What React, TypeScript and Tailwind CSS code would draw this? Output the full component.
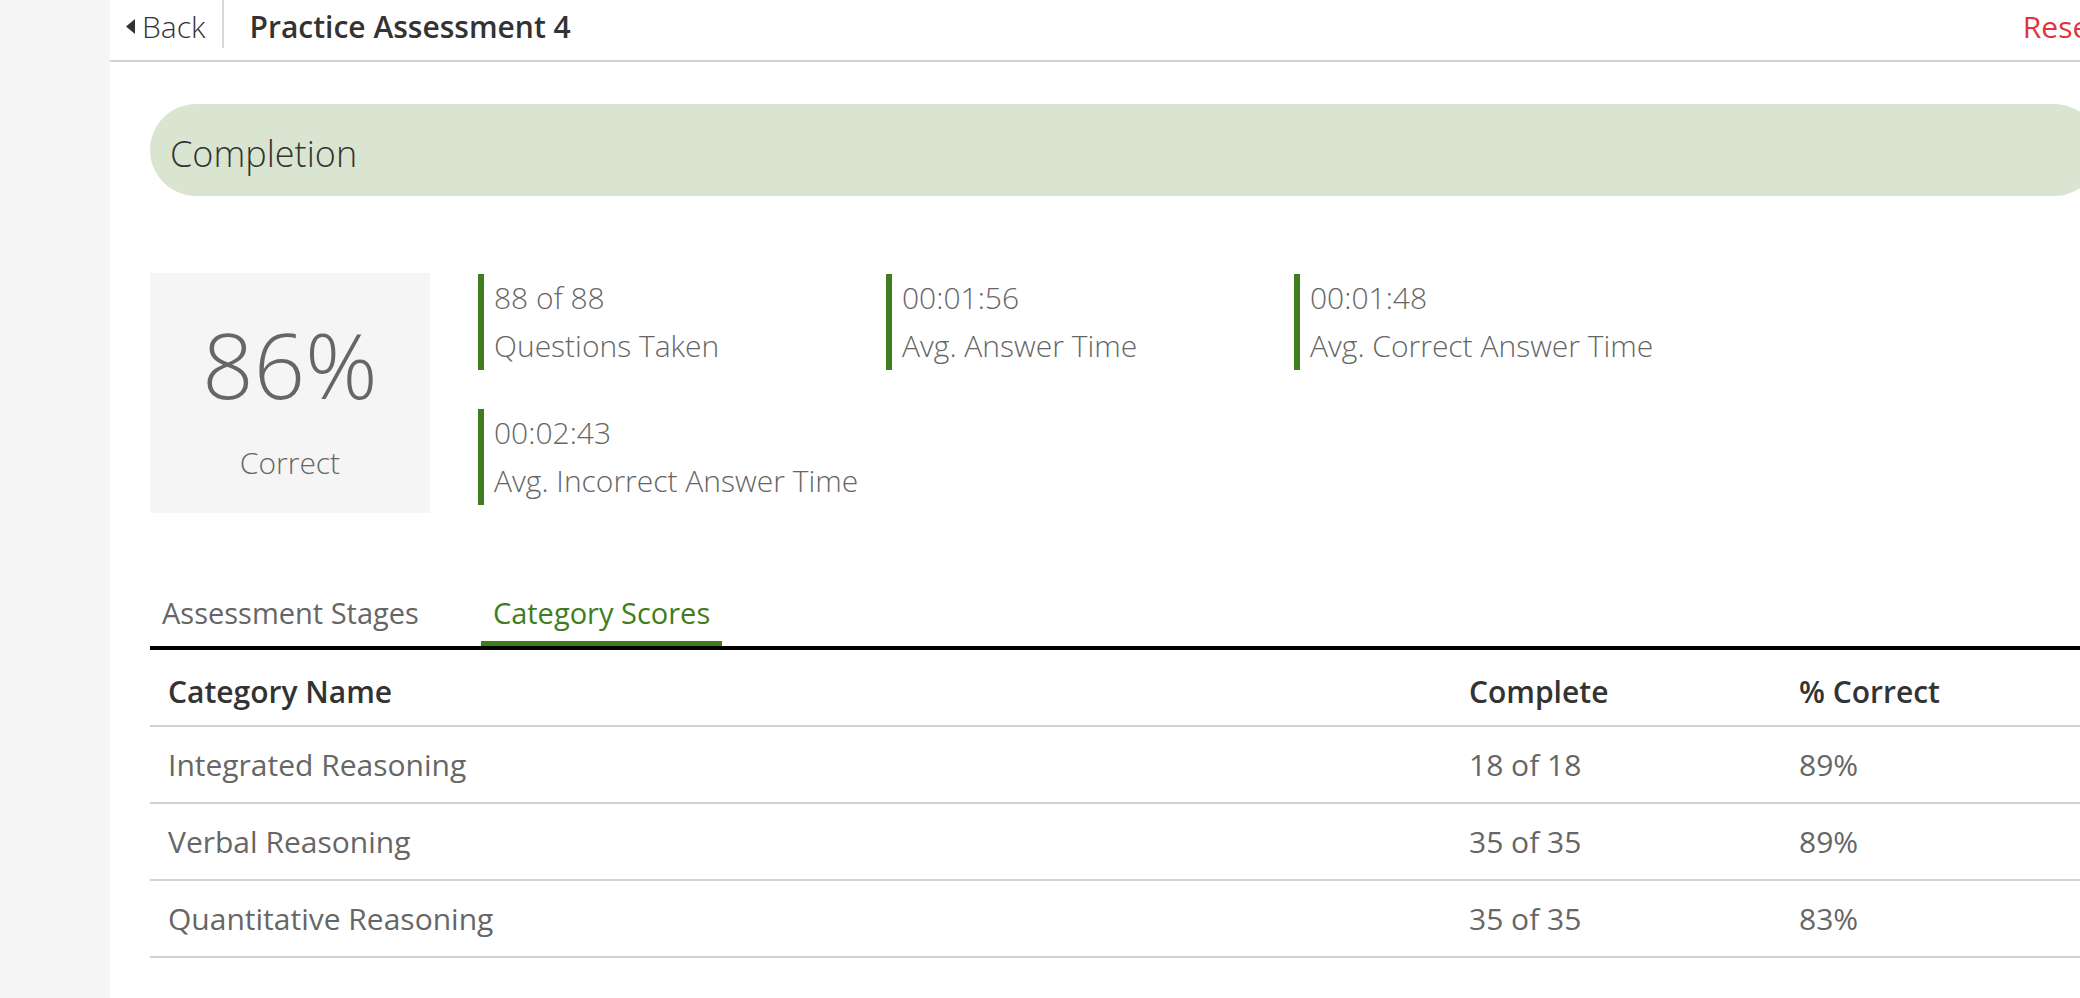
import React from 'react';

const stats = [
  { value: '88 of 88', label: 'Questions Taken' },
  { value: '00:01:56', label: 'Avg. Answer Time' },
  { value: '00:01:48', label: 'Avg. Correct Answer Time' },
  { value: '00:02:43', label: 'Avg. Incorrect Answer Time' },
];

const rows = [
  { name: 'Integrated Reasoning', complete: '18 of 18', correct: '89%' },
  { name: 'Verbal Reasoning', complete: '35 of 35', correct: '89%' },
  { name: 'Quantitative Reasoning', complete: '35 of 35', correct: '83%' },
];

function StatItem({ value, label }: { value: string; label: string }) {
  return (
    <div className="h-[96px] border-l-[6px] border-[#3f7d1e] pl-[10px] font-light text-[30px] leading-[48px] text-[#666]">
      <div>{value}</div>
      <div className="whitespace-nowrap">{label}</div>
    </div>
  );
}

export default function App() {
  return (
    <div
      className="flex w-[2080px] h-[998px] overflow-hidden bg-white"
      style={{ fontFamily: '"Open Sans", "Liberation Sans", sans-serif' }}
    >
      <aside className="w-[110px] shrink-0 bg-[#f5f5f5]" />
      <div className="w-[2030px] shrink-0">
        {/* top bar */}
        <header className="flex items-start justify-between h-[62px] border-b-2 border-[#d2d2d2] pl-[16px] pr-[40px]">
          <div className="flex items-start">
            <button className="flex items-center h-[52px] gap-[7px] text-[30px] font-light text-[#333]">
              <svg width="9" height="15" viewBox="0 0 9 15">
                <path d="M9 0 L0 7.5 L9 15 Z" fill="#333" />
              </svg>
              Back
            </button>
            <div className="ml-[17px] w-[2px] h-[48px] bg-[#d8d8d8]" />
            <h1 className="ml-[25px] h-[52px] flex items-center text-[30px] font-semibold text-[#333]">
              Practice Assessment 4
            </h1>
          </div>
          <button className="h-[52px] flex items-center text-[30px] text-[#e0333a]">Reset</button>
        </header>

        <div className="px-[40px]">
          {/* banner */}
          <div className="mt-[42px] h-[92px] rounded-full bg-[#d9e5d0] flex items-center pl-[20px]">
            <h2 className="text-[36px] font-light text-[#333] pt-[8px]">Completion</h2>
          </div>

          {/* summary */}
          <div className="mt-[77px] flex">
            <div className="w-[280px] h-[240px] shrink-0 bg-[#f5f5f5] flex flex-col items-center text-[#666]">
              <div className="mt-[36px] text-[90px] font-light leading-[110px]">86%</div>
              <div className="mt-[24px] text-[30px] font-light leading-[40px]">Correct</div>
            </div>
            <div className="ml-[48px] grid grid-cols-[408px_408px_408px] gap-y-[39px] pt-[1px] self-start">
              {stats.map((s) => (
                <StatItem key={s.label} value={s.value} label={s.label} />
              ))}
            </div>
          </div>

          {/* tabs */}
          <div className="mt-[76px] flex gap-[50px] border-b-4 border-black">
            <div className="px-[12px] pb-[9px] text-[29px] leading-[48px] text-[#666]">Assessment Stages</div>
            <div className="px-[12px] pb-[4px] text-[29px] leading-[48px] text-[#3f7d1e] border-b-[5px] border-[#3f7d1e]">
              Category Scores
            </div>
          </div>

          {/* table */}
          <div className="text-[30px]">
            <div className="grid grid-cols-[1301px_330px_1fr] h-[77px] pt-[8px] items-center border-b-2 border-[#d2d2d2] font-semibold text-[#333]">
              <div className="px-[18px]">Category Name</div>
              <div className="px-[18px]">Complete</div>
              <div className="px-[18px]">% Correct</div>
            </div>
            {rows.map((r) => (
              <div
                key={r.name}
                className="grid grid-cols-[1301px_330px_1fr] h-[77px] items-center border-b-2 border-[#d2d2d2] text-[#666]"
              >
                <div className="px-[18px]">{r.name}</div>
                <div className="px-[18px]">{r.complete}</div>
                <div className="px-[18px]">{r.correct}</div>
              </div>
            ))}
          </div>
        </div>
      </div>
    </div>
  );
}
